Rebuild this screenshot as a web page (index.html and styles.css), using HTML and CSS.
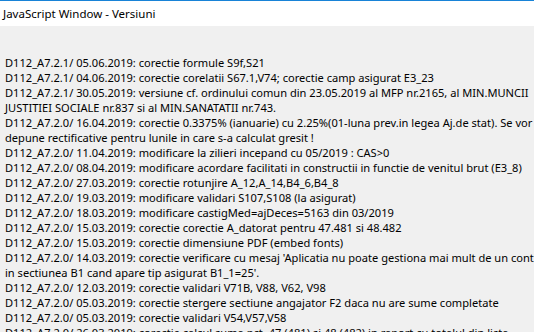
FILE: index.html
```html
<!DOCTYPE html>
<html lang="ro">
<head>
    <title>JavaScript Window - Versiuni</title>
    <meta charset="UTF-8">
    <link rel="stylesheet" href="styles.css">
</head>
<body>

<div class="window">
    <div class="titlebar">JavaScript Window - Versiuni</div>

    <div class="content">
        <div class="line">D112_A7.2.1/ 05.06.2019: corectie formule S9f,S21</div>
        <div class="line">D112_A7.2.1/ 04.06.2019: corectie corelatii S67.1,V74; corectie camp asigurat E3_23</div>
        <div class="line">D112_A7.2.1/ 30.05.2019: versiune cf. ordinului comun din 23.05.2019 al MFP nr.2165, al MIN.MUNCII</div>
        <div class="line">JUSTITIEI SOCIALE nr.837 si al MIN.SANATATII nr.743.</div>
        <div class="line">D112_A7.2.0/ 16.04.2019: corectie 0.3375% (ianuarie) cu 2.25%(01-luna prev.in legea Aj.de stat). Se vor</div>
        <div class="line">depune rectificative pentru lunile in care s-a calculat gresit !</div>
        <div class="line">D112_A7.2.0/ 11.04.2019: modificare la zilieri incepand cu 05/2019 : CAS&gt;0</div>
        <div class="line">D112_A7.2.0/ 08.04.2019: modificare acordare facilitati in constructii in functie de venitul brut (E3_8)</div>
        <div class="line">D112_A7.2.0/ 27.03.2019: corectie rotunjire A_12,A_14,B4_6,B4_8</div>
        <div class="line">D112_A7.2.0/ 19.03.2019: modificare validari S107,S108 (la asigurat)</div>
        <div class="line">D112_A7.2.0/ 18.03.2019: modificare castigMed=ajDeces=5163 din 03/2019</div>
        <div class="line">D112_A7.2.0/ 15.03.2019: corectie corectie A_datorat pentru 47.481 si 48.482</div>
        <div class="line">D112_A7.2.0/ 15.03.2019: corectie dimensiune PDF (embed fonts)</div>
        <div class="line">D112_A7.2.0/ 14.03.2019: corectie verificare cu mesaj 'Aplicatia nu poate gestiona mai mult de un cont</div>
        <div class="line">in sectiunea B1 cand apare tip asigurat B1_1=25'.</div>
        <div class="line">D112_A7.2.0/ 12.03.2019: corectie validari V71B, V88, V62, V98</div>
        <div class="line">D112_A7.2.0/ 05.03.2019: corectie stergere sectiune angajator F2 daca nu are sume completate</div>
        <div class="line">D112_A7.2.0/ 05.03.2019: corectie validari V54,V57,V58</div>
        <div class="line">D112_A7.2.0/ 26.03.2019: corectie calcul suma pct. 47 (481) si 48 (482) in raport cu totalul din lista</div>
    </div>
</div>

</body>
</html>
```

FILE: styles.css
```css
* {
  box-sizing: border-box;
}

body {
  margin: 0;
  font-family: "Noto Sans", "Open Sans", sans-serif;
  font-size: 11.1px;
  color: #000;
  background: #f0f0f0;
}

.window {
  width: 534px;
  height: 332px;
  overflow: hidden;
  display: flex;
  flex-direction: column;
}

/* Title bar */
.titlebar {
  height: 26px;
  flex-shrink: 0;
  border-top: 1px solid #1883d7;
  background: #fff;
  padding: 5px 0 0 3px;
  font-size: 11.5px;
  line-height: 16px;
}

.content {
  flex: 1;
  background: #f0f0f0;
  padding: 29px 0 0 5px;
}

.line {
  white-space: nowrap;
  line-height: 15px;
}
```
